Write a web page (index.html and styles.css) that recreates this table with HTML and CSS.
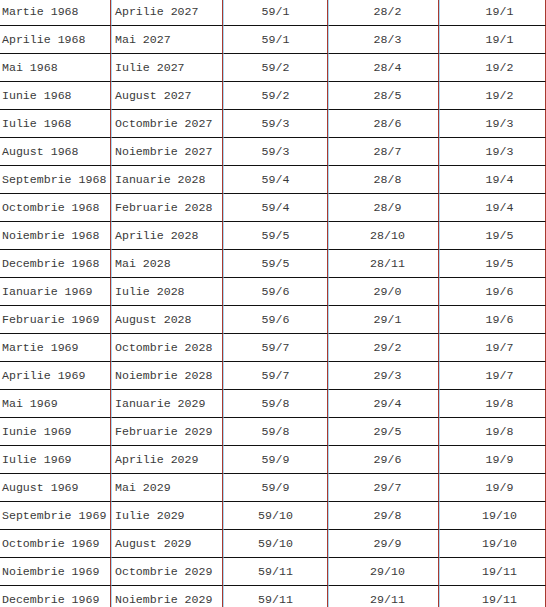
FILE: index.html
```html
<!DOCTYPE html>
<html>
<head>
<meta charset="utf-8">
<link rel="stylesheet" href="styles.css">
</head>
<body>
<table class="tbl">
<colgroup><col class="c1"><col class="c2"><col class="c3"><col class="c4"><col class="c5"></colgroup>
<tbody>
<tr><td>Martie 1968</td><td>Aprilie 2027</td><td>59/1</td><td>28/2</td><td>19/1</td></tr>
<tr><td>Aprilie 1968</td><td>Mai 2027</td><td>59/1</td><td>28/3</td><td>19/1</td></tr>
<tr><td>Mai 1968</td><td>Iulie 2027</td><td>59/2</td><td>28/4</td><td>19/2</td></tr>
<tr><td>Iunie 1968</td><td>August 2027</td><td>59/2</td><td>28/5</td><td>19/2</td></tr>
<tr><td>Iulie 1968</td><td>Octombrie 2027</td><td>59/3</td><td>28/6</td><td>19/3</td></tr>
<tr><td>August 1968</td><td>Noiembrie 2027</td><td>59/3</td><td>28/7</td><td>19/3</td></tr>
<tr><td>Septembrie 1968</td><td>Ianuarie 2028</td><td>59/4</td><td>28/8</td><td>19/4</td></tr>
<tr><td>Octombrie 1968</td><td>Februarie 2028</td><td>59/4</td><td>28/9</td><td>19/4</td></tr>
<tr><td>Noiembrie 1968</td><td>Aprilie 2028</td><td>59/5</td><td>28/10</td><td>19/5</td></tr>
<tr><td>Decembrie 1968</td><td>Mai 2028</td><td>59/5</td><td>28/11</td><td>19/5</td></tr>
<tr><td>Ianuarie 1969</td><td>Iulie 2028</td><td>59/6</td><td>29/0</td><td>19/6</td></tr>
<tr><td>Februarie 1969</td><td>August 2028</td><td>59/6</td><td>29/1</td><td>19/6</td></tr>
<tr><td>Martie 1969</td><td>Octombrie 2028</td><td>59/7</td><td>29/2</td><td>19/7</td></tr>
<tr><td>Aprilie 1969</td><td>Noiembrie 2028</td><td>59/7</td><td>29/3</td><td>19/7</td></tr>
<tr><td>Mai 1969</td><td>Ianuarie 2029</td><td>59/8</td><td>29/4</td><td>19/8</td></tr>
<tr><td>Iunie 1969</td><td>Februarie 2029</td><td>59/8</td><td>29/5</td><td>19/8</td></tr>
<tr><td>Iulie 1969</td><td>Aprilie 2029</td><td>59/9</td><td>29/6</td><td>19/9</td></tr>
<tr><td>August 1969</td><td>Mai 2029</td><td>59/9</td><td>29/7</td><td>19/9</td></tr>
<tr><td>Septembrie 1969</td><td>Iulie 2029</td><td>59/10</td><td>29/8</td><td>19/10</td></tr>
<tr><td>Octombrie 1969</td><td>August 2029</td><td>59/10</td><td>29/9</td><td>19/10</td></tr>
<tr><td>Noiembrie 1969</td><td>Octombrie 2029</td><td>59/11</td><td>29/10</td><td>19/11</td></tr>
<tr><td>Decembrie 1969</td><td>Noiembrie 2029</td><td>59/11</td><td>29/11</td><td>19/11</td></tr>
</tbody>
</table>
</body>
</html>
```
FILE: styles.css
```css
html, body {
  margin: 0;
  padding: 0;
  background: #fff;
}
.tbl {
  margin-top: -2px;
  width: 546px;
  table-layout: fixed;
  border-collapse: separate;
  border-spacing: 0;
  font-family: "Liberation Mono", "Courier New", monospace;
  font-size: 11.6px;
  color: #3a3a3a;
}
.c1 { width: 111px; }
.c2 { width: 112px; }
.c3 { width: 105px; }
.c4 { width: 111px; }
.c5 { width: 107px; }
.tbl td {
  height: 28px;
  padding: 0;
  box-sizing: border-box;
  border-bottom: 1px solid #111;
  border-right: 1px solid #a83a30;
  vertical-align: middle;
  white-space: nowrap;
  overflow: hidden;
  line-height: 27px;
}
.tbl td + td {
  border-left: 1px solid #a6d8f2;
}
.tbl td:nth-child(1) { width: 111px; padding-left: 2px; }
.tbl td:nth-child(2) { width: 112px; padding-left: 3px; }
.tbl td:nth-child(3) { width: 105px; text-align: center; }
.tbl td:nth-child(4) { width: 111px; text-align: center; padding-left: 8px; }
.tbl td:nth-child(5) { width: 107px; text-align: center; padding-left: 14px; }
```
